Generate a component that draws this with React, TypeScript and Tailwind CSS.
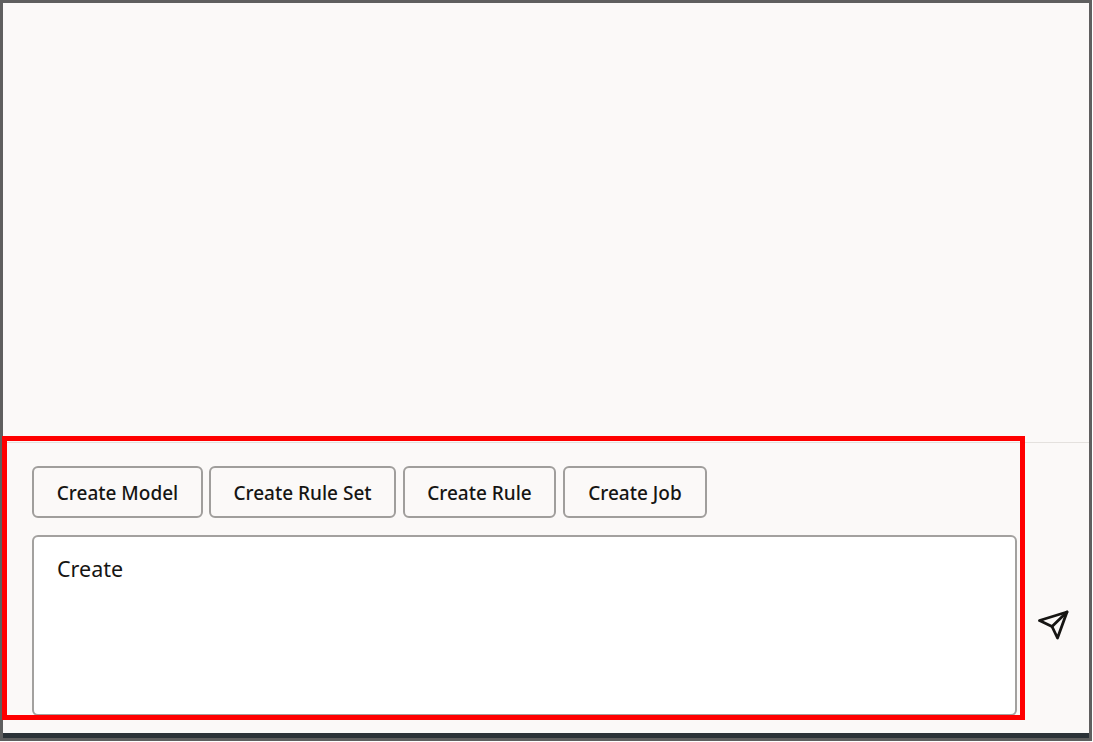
const actions = [
  { label: 'Create Model', width: 'w-[171px]' },
  { label: 'Create Rule Set', width: 'w-[187px]' },
  { label: 'Create Rule', width: 'ml-px w-[153px]' },
  { label: 'Create Job', width: 'ml-px w-[144px]' },
]

function SendIcon() {
  return (
    <svg width="32" height="32" viewBox="0 0 32 32" fill="none" stroke="#161513" strokeWidth="2.8" strokeLinejoin="round" strokeLinecap="round">
      <path d="M1.5 11.5 L29 3 L19.5 29 L14 17.5 Z" />
      <path d="M14 17.5 L29 3" />
    </svg>
  )
}

export default function App() {
  return (
    <div className="relative h-[742px] w-[1093px] overflow-hidden bg-white font-['Noto_Sans',sans-serif] text-[#161513]">
      <div className="flex h-[741px] w-[1092px] flex-col border-[3px] border-[#5f5f5f] bg-[#fbf9f8]">
        <div className="h-[440px] border-b border-[#e4e1de]" />
        <div className="flex flex-1 flex-col pl-[29px] pt-[23px]">
          <div className="flex gap-[6px]">
            {actions.map((action) => (
              <button
                key={action.label}
                className={`${action.width} h-[52px] rounded-[6px] border-2 border-[#a09e9c] bg-[#fbf9f8] pt-[3px] text-[19px] font-medium`}
              >
                {action.label}
              </button>
            ))}
          </div>
          <div className="mt-[17px] flex items-start">
            <div className="h-[181px] w-[985px] rounded-[6px] border-2 border-[#a3a19f] bg-white px-[23px] pb-[15px] pt-[17px] text-[21.5px] leading-[30px]">
              Create
            </div>
            <div className="ml-[21px] mt-[74px]">
              <SendIcon />
            </div>
          </div>
        </div>
        <div className="h-[5px] bg-[#2c3338]" />
      </div>
      <div className="pointer-events-none absolute left-[2px] top-[436px] h-[284px] w-[1023px] border-[5px] border-[#ff0000]" />
    </div>
  )
}
